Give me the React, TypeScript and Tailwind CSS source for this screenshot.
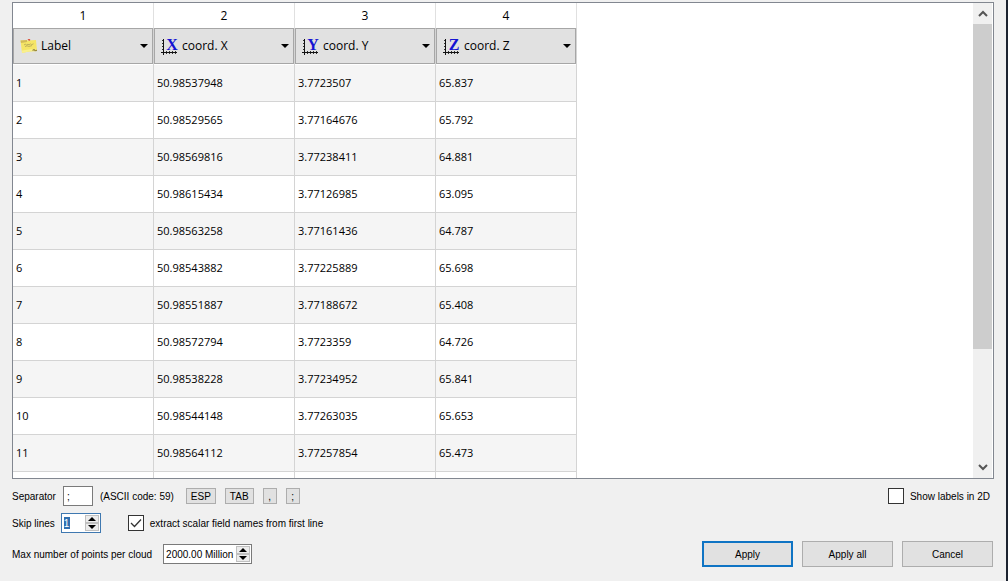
import React, { useState } from "react";
import type { ReactNode } from "react";

const rows: string[][] = [
  ["1", "50.98537948", "3.7723507", "65.837"],
  ["2", "50.98529565", "3.77164676", "65.792"],
  ["3", "50.98569816", "3.77238411", "64.881"],
  ["4", "50.98615434", "3.77126985", "63.095"],
  ["5", "50.98563258", "3.77161436", "64.787"],
  ["6", "50.98543882", "3.77225889", "65.698"],
  ["7", "50.98551887", "3.77188672", "65.408"],
  ["8", "50.98572794", "3.7723359", "64.726"],
  ["9", "50.98538228", "3.77234952", "65.841"],
  ["10", "50.98544148", "3.77263035", "65.653"],
  ["11", "50.98564112", "3.77257854", "65.473"],
  ["", "", "", ""],
];

const roles = ["Label", "coord. X", "coord. Y", "coord. Z"];

function NoteIcon() {
  return (
    <svg viewBox="0 0 18 16" className="h-4 w-[18px]" aria-hidden="true">
      <path d="M0.5 2.5 L8 2.5 L16 2 L17 13 L9 13.5 L2 15 Z" fill="#f5e566" />
      <path d="M0.5 2.5 L7 2 L7 4 L1 5 Z" fill="#d3bb55" />
      <path d="M2 12.5 L15.5 10.5 L17 13 L9 13.5 L2 15 Z" fill="#f9f08c" />
      <path d="M4 7 l1.5 -1 l1 1.2 l1.5 -1.2 l1 1 l1.5 -1.2 l1 1 l2 -1 M5 8.6 l2 -.8 l2 .6 l3 -.8" fill="none" stroke="#b3a457" strokeWidth=".8" />
      <path d="M12.5 12.5 l1.5 -1 l1 1 l2 -.2" fill="none" stroke="#9c8c3c" strokeWidth="1.2" />
      <path d="M7.5 1 h2.6 v1.8 h-1.4 z" fill="#dc5a45" />
    </svg>
  );
}

function AxisIcon({ letter }: { letter: string }) {
  return (
    <svg viewBox="0 0 17 17" className="h-[17px] w-[17px] overflow-visible" aria-hidden="true">
      <path d="M2.5 1 V17 M0 14.5 H16" stroke="#111" strokeWidth="1" fill="none" />
      <path
        d="M1 2.5 H2 M1 5.5 H2 M1 8.5 H2 M1 11.5 H2 M5.5 15 V16 M8.5 15 V16 M11.5 15 V16 M14.5 15 V16 M5.5 13 V14 M8.5 13 V14 M11.5 13 V14 M14.5 13 V14"
        stroke="#333"
        strokeWidth="1"
        fill="none"
      />
      <text x="11" y="12" textAnchor="middle" fontSize="16" fontWeight="700" fontFamily="Liberation Serif, serif" fill="#1414d2">
        {letter}
      </text>
    </svg>
  );
}

function RoleSelect({ index }: { index: number }) {
  const role = roles[index];
  return (
    <div className="relative h-9">
      <span className="pointer-events-none absolute inset-y-0 left-[7px] flex items-center">
        {index === 0 ? <NoteIcon /> : <AxisIcon letter={role.slice(-1)} />}
      </span>
      <select
        aria-label={`Column ${index + 1} role`}
        defaultValue={role}
        className="block h-full w-full appearance-none border border-[#a6a6a6] bg-[#e1e1e1] pl-[27px] text-xs leading-5 text-black outline-none"
      >
        {roles.map((r) => (
          <option key={r}>{r}</option>
        ))}
      </select>
      <span className="pointer-events-none absolute inset-y-0 right-[5px] flex items-center">
        <svg viewBox="0 0 8 4" className="h-1 w-2" aria-hidden="true">
          <path d="M0 0 H8 L4 4 Z" fill="#000" />
        </svg>
      </span>
    </div>
  );
}

function ScrollButton({ down = false }: { down?: boolean }) {
  return (
    <button type="button" aria-label={down ? "Scroll down" : "Scroll up"} className="flex h-[21px] items-center justify-center">
      <svg viewBox="0 0 10 7" className="h-[7px] w-[10px]" aria-hidden="true">
        <path d={down ? "M1 1 L5 5 L9 1" : "M1 6 L5 2 L9 6"} fill="none" stroke="#555" strokeWidth="2" />
      </svg>
    </button>
  );
}

function SpinButtons({ label }: { label: string }) {
  return (
    <span className="flex w-[14px] shrink-0 flex-col">
      {["Increase", "Decrease"].map((action) => (
        <button
          key={action}
          type="button"
          aria-label={`${action} ${label}`}
          className="flex h-2 items-center justify-center border border-[#c0c0c0] bg-[#ececec]"
        >
          <svg viewBox="0 0 8 4" className="h-1 w-2 shrink-0" aria-hidden="true">
            <path d={action === "Increase" ? "M0 4 H8 L4 0 Z" : "M0 0 H8 L4 4 Z"} fill="#000" />
          </svg>
        </button>
      ))}
    </span>
  );
}

function CheckBox({ label, initial = false }: { label: string; initial?: boolean }) {
  const [checked, setChecked] = useState(initial);
  return (
    <label className="flex items-center gap-[6px]">
      <span className="relative flex h-4 w-4">
        <input
          type="checkbox"
          checked={checked}
          onChange={(e) => setChecked(e.target.checked)}
          className="h-4 w-4 appearance-none border border-[#333] bg-white"
        />
        {checked && (
          <svg viewBox="0 0 16 16" className="pointer-events-none absolute inset-0" aria-hidden="true">
            <path d="M3 8 L6.5 11.5 L13 4.5" fill="none" stroke="#333" strokeWidth="1.3" />
          </svg>
        )}
      </span>
      {label}
    </label>
  );
}

function SmallButton({ children }: { children: ReactNode }) {
  return (
    <button type="button" className="flex h-4 min-w-[14px] items-center justify-center border border-[#adadad] bg-[#e1e1e1] px-1">
      {children}
    </button>
  );
}

function DialogButton({ children, primary = false }: { children: ReactNode; primary?: boolean }) {
  return (
    <button
      type="button"
      className={
        primary
          ? "h-[26px] w-[91px] border-2 border-[#0f74c4] bg-[#e1e1e1]"
          : "h-[26px] w-[91px] border border-[#adadad] bg-[#e1e1e1]"
      }
    >
      {children}
    </button>
  );
}

export default function App() {
  return (
    <div className="flex h-screen flex-col border-r-2 border-[#1c2330] bg-[#f0f0f0] pt-[2px] pr-3 pb-[13px] pl-3 font-['Liberation_Sans',sans-serif] text-[10px] text-black">
      <div className="flex min-h-0 flex-1 border border-[#828790] bg-white">
        <div className="min-w-0 flex-1 overflow-hidden">
          <table className="table-fixed border-separate border-spacing-0 font-['Open_Sans',sans-serif] text-[11px]">
            <colgroup>
              {roles.map((r) => (
                <col key={r} className="w-[141px]" />
              ))}
            </colgroup>
            <thead>
              <tr className="h-[25px]">
                {roles.map((r, i) => (
                  <th key={r} scope="col" className="border-r border-[#e0e0e0] p-0 text-xs font-normal">
                    {i + 1}
                  </th>
                ))}
              </tr>
            </thead>
            <tbody>
              <tr className="h-[37px]">
                {roles.map((r, i) => (
                  <td key={r} className="border-r border-[#d4d4d4] p-0 align-top">
                    <RoleSelect index={i} />
                  </td>
                ))}
              </tr>
              {rows.map((row, n) => (
                <tr key={n} className="h-[37px] odd:bg-white even:bg-[#f5f5f5]">
                  {row.map((value, i) => (
                    <td key={i} className="border-r border-b border-[#d4d4d4] px-[3px] py-0">
                      {value}
                    </td>
                  ))}
                </tr>
              ))}
            </tbody>
          </table>
        </div>
        <div className="mr-px flex w-[19px] flex-col bg-[#f0f0f0]">
          <ScrollButton />
          <div className="min-h-0 flex-1">
            <div className="h-3/4 bg-[#cdcdcd]" />
          </div>
          <ScrollButton down />
        </div>
      </div>

      <div className="mt-[7px] flex h-5 items-center">
        <label htmlFor="separator">Separator</label>
        <input id="separator" defaultValue=";" className="mr-[7px] ml-[7px] h-5 w-[30px] border border-[#7a7a7a] bg-white px-[3px] outline-none" />
        <span>(ASCII code: 59)</span>
        <div className="ml-3 flex gap-[9px]">
          <SmallButton>ESP</SmallButton>
          <SmallButton>TAB</SmallButton>
          <SmallButton>,</SmallButton>
          <SmallButton>;</SmallButton>
        </div>
        <div className="mr-1 ml-auto">
          <CheckBox label="Show labels in 2D" />
        </div>
      </div>

      <div className="mt-[7px] flex h-5 items-center">
        <label htmlFor="skip">Skip lines</label>
        <div className="mr-[27px] ml-[6px] flex h-5 w-10 items-center border border-[#3f78b0] bg-white pr-px pl-[2px]">
          <span className="flex min-w-0 flex-1">
            <input id="skip" defaultValue="1" className="h-3 w-[6px] bg-[#2f6fb0] text-white outline-none" />
          </span>
          <SpinButtons label="skip lines" />
        </div>
        <CheckBox label="extract scalar field names from first line" initial />
      </div>

      <div className="mt-[7px] flex h-7 items-center">
        <label htmlFor="max-points">Max number of points per cloud</label>
        <div className="ml-[11px] flex h-5 w-[89px] items-center border border-[#7a7a7a] bg-white pr-px pl-[2px]">
          <input id="max-points" defaultValue="2000.00 Million" className="min-w-0 flex-1 bg-transparent outline-none" />
          <SpinButtons label="max number of points" />
        </div>
        <div className="mr-px ml-auto flex gap-[9px]">
          <DialogButton primary>Apply</DialogButton>
          <DialogButton>Apply all</DialogButton>
          <DialogButton>Cancel</DialogButton>
        </div>
      </div>
    </div>
  );
}
